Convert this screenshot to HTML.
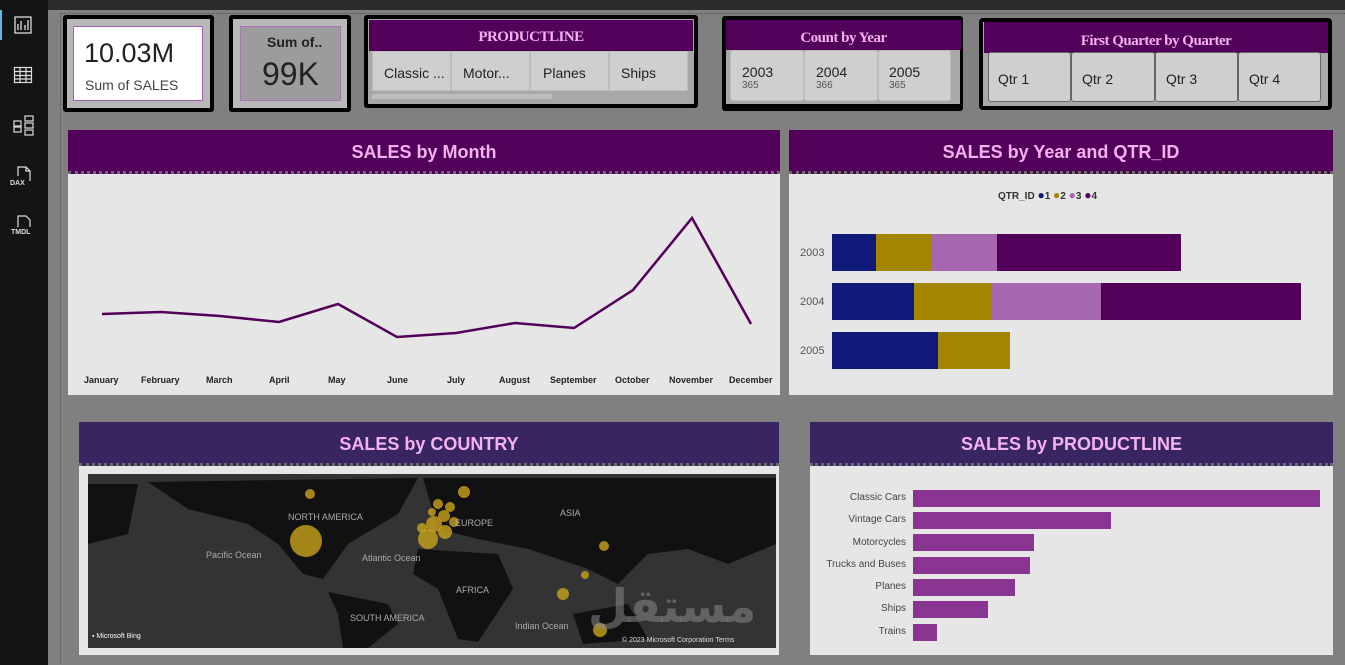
<!DOCTYPE html>
<html><head><meta charset="utf-8"><style>
*{box-sizing:border-box;margin:0;padding:0}
body{width:1345px;height:665px;overflow:hidden;background:#808080;font-family:"Liberation Sans",sans-serif;position:relative}
.abs{position:absolute}
.side{left:0;top:0;width:48px;height:665px;background:#141414}
.topbar{left:0;top:0;width:1345px;height:10px;background:#2b2b2b}
.hdr{background:#52005a;color:#f4b2f0;font-weight:bold;text-align:center}
.ser{font-family:"Liberation Serif",serif;letter-spacing:-0.5px}
.btn{background:#cfcfcf;border:1px solid #bdbdbd;font-size:14px;color:#222;position:absolute}
.panel{background:#e6e6e6}
.dots{border-bottom:3px dotted #6a6a6a}
.lbl{font-size:9px;font-weight:bold;color:#222;position:absolute}
</style></head><body>
<div class="abs topbar"></div>
<div class="abs side"></div>
<div class="abs" style="left:48px;top:10px;width:1297px;height:655px;background:#808080"></div>
<div class="abs" style="left:60px;top:13px;width:1285px;border-top:1px dotted #555"></div>
<div class="abs" style="left:60px;top:13px;height:650px;border-left:1px dotted #555"></div>
<div class="abs" style="left:0;top:10px;width:2px;height:30px;background:#5bb8e8"></div>
<svg class="abs" style="left:13px;top:15px" width="20" height="20" viewBox="0 0 20 20" fill="none" stroke="#ddd" stroke-width="1.3"><rect x="2" y="2" width="16" height="16"/><path d="M5 15V9M8 15V6M12 15V10M15 15V5"/></svg>
<svg class="abs" style="left:13px;top:65px" width="20" height="20" viewBox="0 0 20 20" fill="none" stroke="#ddd" stroke-width="1.2"><rect x="1.5" y="2.5" width="17" height="15"/><path d="M1.5 6.5h17M1.5 10.5h17M1.5 14h17M7 2.5v15M13 2.5v15"/></svg>
<svg class="abs" style="left:12px;top:114px" width="24" height="24" viewBox="0 0 24 24" fill="none" stroke="#ddd" stroke-width="1.2"><rect x="2" y="7" width="7" height="5"/><rect x="2" y="13" width="7" height="5"/><rect x="13" y="2" width="8" height="5"/><rect x="13" y="9" width="8" height="5"/><rect x="13" y="16" width="8" height="5"/></svg>
<svg class="abs" style="left:14px;top:166px" width="20" height="18" viewBox="0 0 20 18" fill="none" stroke="#ddd" stroke-width="1.2"><path d="M4 10V1h8l4 4v10"/><path d="M12 1v4h4"/></svg>
<div class="abs" style="left:10px;top:180px;font-size:7px;color:#ddd;font-weight:bold">DAX</div>
<svg class="abs" style="left:14px;top:215px" width="20" height="14" viewBox="0 0 20 14" fill="none" stroke="#ddd" stroke-width="1.2"><path d="M4 12V1h8l4 4v7"/></svg>
<div class="abs" style="left:11px;top:229px;font-size:7px;color:#ddd;font-weight:bold">TMDL</div>

<div class="abs" style="left:63px;top:15px;width:151px;height:97px;background:#000;border-radius:3px"></div>
<div class="abs" style="left:67px;top:19px;width:143px;height:89px;background:#b8b8b8"></div>
<div class="abs" style="left:73px;top:26px;width:130px;height:75px;background:#fff;border:1px solid #a35fb0"></div>
<div class="abs" style="left:84px;top:38px;font-size:27px;color:#222">10.03M</div>
<div class="abs" style="left:85px;top:77px;font-size:14px;color:#444">Sum of SALES</div>
<div class="abs" style="left:229px;top:15px;width:122px;height:97px;background:#000;border-radius:3px"></div>
<div class="abs" style="left:233px;top:19px;width:114px;height:89px;background:#b8b8b8"></div>
<div class="abs" style="left:240px;top:26px;width:101px;height:75px;background:#9c9c9c;border:1px dotted #a35fb0"></div>
<div class="abs" style="left:267px;top:34px;font-size:14px;font-weight:bold;color:#222">Sum of..</div>
<div class="abs" style="left:262px;top:56px;font-size:32px;color:#222">99K</div>
<div class="abs" style="left:364px;top:15px;width:334px;height:93px;background:#000;border-radius:3px"></div>
<div class="abs" style="left:368px;top:19px;width:326px;height:85px;background:#a8a8a8"></div>
<div class="abs hdr ser" style="left:369px;top:20px;width:324px;height:31px;line-height:35px;font-size:15px">PRODUCTLINE</div>
<div class="btn" style="left:372px;top:51px;width:79px;height:40px;padding:13px 0 0 11px">Classic ...</div>
<div class="btn" style="left:451px;top:51px;width:79px;height:40px;padding:13px 0 0 11px">Motor...</div>
<div class="btn" style="left:530px;top:51px;width:79px;height:40px;padding:13px 0 0 12px">Planes</div>
<div class="btn" style="left:609px;top:51px;width:79px;height:40px;padding:13px 0 0 11px">Ships</div>
<div class="abs" style="left:372px;top:94px;width:180px;height:5px;background:#bdbdbd"></div>
<div class="abs" style="left:722px;top:16px;width:241px;height:95px;background:#000;border-radius:3px"></div>
<div class="abs" style="left:726px;top:20px;width:234px;height:84px;background:#a8a8a8"></div>
<div class="abs hdr ser" style="left:726px;top:20px;width:235px;height:30px;line-height:36px;font-size:15px">Count by Year</div>
<div class="btn" style="left:730px;top:50px;width:74px;height:51px;padding:13px 0 0 11px;border-radius:3px">2003<div style="font-size:10px;color:#555">365</div></div>
<div class="btn" style="left:804px;top:50px;width:74px;height:51px;padding:13px 0 0 11px;border-radius:3px">2004<div style="font-size:10px;color:#555">366</div></div>
<div class="btn" style="left:878px;top:50px;width:73px;height:51px;padding:13px 0 0 10px;border-radius:3px">2005<div style="font-size:10px;color:#555">365</div></div>
<div class="abs" style="left:979px;top:18px;width:353px;height:92px;background:#000;border-radius:4px"></div>
<div class="abs" style="left:983px;top:22px;width:345px;height:84px;background:#a8a8a8"></div>
<div class="abs hdr ser" style="left:984px;top:22px;width:344px;height:31px;line-height:38px;font-size:15px">First Quarter by Quarter</div>
<div class="btn" style="left:988px;top:52px;width:83px;height:50px;padding:18px 0 0 9px;border:1px solid #666;border-radius:3px">Qtr 1</div>
<div class="btn" style="left:1071px;top:52px;width:84px;height:50px;padding:18px 0 0 10px;border:1px solid #666;border-radius:3px">Qtr 2</div>
<div class="btn" style="left:1155px;top:52px;width:83px;height:50px;padding:18px 0 0 10px;border:1px solid #666;border-radius:3px">Qtr 3</div>
<div class="btn" style="left:1238px;top:52px;width:83px;height:50px;padding:18px 0 0 10px;border:1px solid #666;border-radius:3px">Qtr 4</div>

<div class="abs panel" style="left:68px;top:130px;width:712px;height:265px"></div>
<div class="abs hdr dots" style="left:68px;top:130px;width:712px;height:44px;line-height:44px;font-size:18px">SALES by Month</div>
<svg class="abs" style="left:68px;top:174px" width="712" height="221"><polyline fill="none" stroke="#52005a" stroke-width="2.5" points="34,140 93,138 152,142 211,148 270,130 329,163 388,159 447,149 506,154 565,116 624,44 683,150"/></svg>
<div class="lbl" style="left:84px;top:375px">January</div>
<div class="lbl" style="left:141px;top:375px">February</div>
<div class="lbl" style="left:206px;top:375px">March</div>
<div class="lbl" style="left:269px;top:375px">April</div>
<div class="lbl" style="left:328px;top:375px">May</div>
<div class="lbl" style="left:387px;top:375px">June</div>
<div class="lbl" style="left:447px;top:375px">July</div>
<div class="lbl" style="left:499px;top:375px">August</div>
<div class="lbl" style="left:550px;top:375px">September</div>
<div class="lbl" style="left:615px;top:375px">October</div>
<div class="lbl" style="left:669px;top:375px">November</div>
<div class="lbl" style="left:729px;top:375px">December</div>

<div class="abs panel" style="left:789px;top:130px;width:544px;height:265px"></div>
<div class="abs hdr dots" style="left:789px;top:130px;width:544px;height:44px;line-height:44px;font-size:18px">SALES by Year and QTR_ID</div>
<div class="abs" style="left:998px;top:188px;font-size:10px;font-weight:bold;color:#333">QTR_ID <span style="color:#0f1a78;font-size:12px">●</span>1 <span style="color:#a38600;font-size:12px">●</span>2 <span style="color:#a666b0;font-size:12px">●</span>3 <span style="color:#52005a;font-size:12px">●</span>4</div>
<div class="abs" style="left:800px;top:247px;font-size:11px;color:#555">2003</div>
<div class="abs" style="left:800px;top:296px;font-size:11px;color:#555">2004</div>
<div class="abs" style="left:800px;top:345px;font-size:11px;color:#555">2005</div>
<div class="abs" style="left:832px;top:234px;height:37px;display:flex"><div style="width:44px;background:#0f1a78"></div><div style="width:55px;background:#a38600"></div><div style="width:66px;background:#a666b0"></div><div style="width:184px;background:#52005a"></div></div>
<div class="abs" style="left:832px;top:283px;height:37px;display:flex"><div style="width:82px;background:#0f1a78"></div><div style="width:77px;background:#a38600"></div><div style="width:110px;background:#a666b0"></div><div style="width:200px;background:#52005a"></div></div>
<div class="abs" style="left:832px;top:332px;height:37px;display:flex"><div style="width:106px;background:#0f1a78"></div><div style="width:72px;background:#a38600"></div></div>

<div class="abs panel" style="left:79px;top:422px;width:700px;height:233px"></div>
<div class="abs hdr dots" style="left:79px;top:422px;width:700px;height:44px;line-height:44px;font-size:18px;background:#3a2563">SALES by COUNTRY</div>
<div class="abs" style="left:88px;top:474px;width:688px;height:174px;background:#333"></div>
<svg class="abs" style="left:88px;top:474px" width="688" height="174">
<g fill="#111">
<path d="M60 8 L330 4 L310 40 L260 70 L235 105 L215 100 L190 70 L160 50 L100 35 Z"/>
<path d="M240 118 L300 130 L310 150 L280 174 L255 174 L250 140 Z"/>
<path d="M335 4 L688 4 L688 70 L640 90 L600 75 L560 80 L530 110 L500 95 L440 75 L390 65 L350 55 Z"/>
<path d="M330 75 L410 80 L425 115 L390 168 L370 165 L350 115 L325 100 Z"/>
<path d="M485 140 L540 130 L560 165 L495 170 Z"/>
<path d="M0 10 L50 10 L40 60 L0 70 Z"/>
</g>
<g fill="#c9a21a" fill-opacity="0.8">
<circle cx="218" cy="67" r="16"/><circle cx="222" cy="20" r="5"/><circle cx="376" cy="18" r="6"/>
<circle cx="340" cy="65" r="10"/><circle cx="346" cy="50" r="8"/><circle cx="356" cy="42" r="6"/><circle cx="362" cy="33" r="5"/><circle cx="350" cy="30" r="5"/><circle cx="357" cy="58" r="7"/><circle cx="334" cy="54" r="5"/><circle cx="344" cy="38" r="4"/><circle cx="366" cy="48" r="5"/>
<circle cx="516" cy="72" r="5"/><circle cx="497" cy="101" r="4"/><circle cx="475" cy="120" r="6"/><circle cx="512" cy="156" r="7"/></g>
<g font-size="9" fill="#aaa"><text x="200" y="46">NORTH AMERICA</text><text x="367" y="52">EUROPE</text><text x="472" y="42">ASIA</text><text x="118" y="84">Pacific Ocean</text><text x="274" y="87">Atlantic Ocean</text><text x="368" y="119">AFRICA</text><text x="262" y="147">SOUTH AMERICA</text><text x="427" y="155">Indian Ocean</text><text x="4" y="164" fill="#fff" font-size="7">▪ Microsoft Bing</text><text x="534" y="168" fill="#ddd" font-size="7">© 2023 Microsoft Corporation  Terms</text></g>
<text x="500" y="148" font-size="46" fill="#888" fill-opacity="0.55" font-weight="bold" font-family="DejaVu Sans">مستقل</text>
</svg>

<div class="abs panel" style="left:810px;top:422px;width:523px;height:233px"></div>
<div class="abs hdr dots" style="left:810px;top:422px;width:523px;height:44px;line-height:44px;font-size:18px;background:#3a2563">SALES by PRODUCTLINE</div>
<div class="abs" style="left:810px;top:487px;width:96px;font-size:10px;color:#444;text-align:right;line-height:22.3px">Classic Cars<br>Vintage Cars<br>Motorcycles<br>Trucks and Buses<br>Planes<br>Ships<br>Trains</div>
<div class="abs" style="left:913px;top:490px;width:407px;height:17px;background:#8a3592"></div>
<div class="abs" style="left:913px;top:512px;width:198px;height:17px;background:#8a3592"></div>
<div class="abs" style="left:913px;top:534px;width:121px;height:17px;background:#8a3592"></div>
<div class="abs" style="left:913px;top:557px;width:117px;height:17px;background:#8a3592"></div>
<div class="abs" style="left:913px;top:579px;width:102px;height:17px;background:#8a3592"></div>
<div class="abs" style="left:913px;top:601px;width:75px;height:17px;background:#8a3592"></div>
<div class="abs" style="left:913px;top:624px;width:24px;height:17px;background:#8a3592"></div>
</body></html>
